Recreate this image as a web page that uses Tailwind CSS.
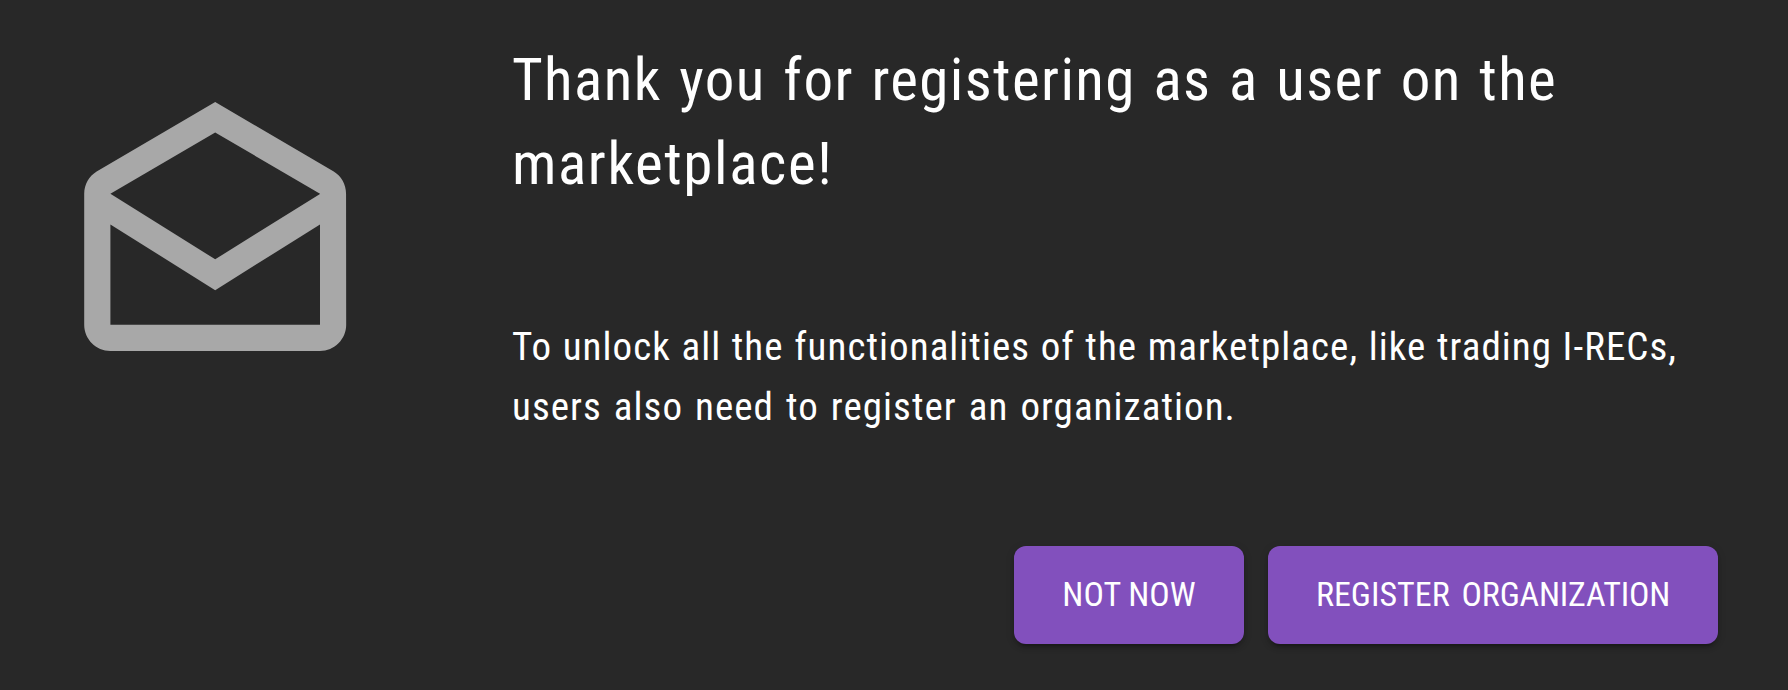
<!DOCTYPE html>
<html lang="en">
<head>
<meta charset="utf-8">
<title>Thank you for registering</title>
<script src="https://cdn.jsdelivr.net/npm/@tailwindcss/browser@4"></script>
</head>
<body class="bg-[#282828] text-white font-['Roboto',sans-serif]">
<main class="flex h-[690px] w-[1788px] overflow-hidden pl-[58px] pr-[70px] pt-[38px]">
  <svg class="mt-[51px] size-[314.4px] shrink-0 fill-[#a8a8a8]" viewBox="0 0 24 24" aria-hidden="true">
    <path d="M21.99 8c0-.72-.37-1.35-.94-1.7L12 1 2.95 6.3C2.38 6.65 2 7.28 2 8v10c0 1.1.9 2 2 2h16c1.1 0 2-.9 2-2l-.01-10zM20 8v.01L12 13 4 8l8-4.68L20 8zM4 18v-7.66l8 5.02 8-5.02V18H4z"/>
  </svg>
  <section class="ml-[139.6px] flex grow flex-col whitespace-nowrap font-normal [font-stretch:75%]">
    <h1 class="text-[59px] leading-[84px]">
      <span class="block tracking-[1.4px] [word-spacing:2.7px]">Thank you for registering as a user on the</span>
      <span class="block tracking-[1.6px]">marketplace!</span>
    </h1>
    <p class="mt-[111px] text-[39px] leading-[60px] tracking-[1.05px]">
      <span class="block [word-spacing:0.6px]">To unlock all the functionalities of the marketplace, like trading I-RECs,</span>
      <span class="block [word-spacing:2px]">users also need to register an organization.</span>
    </p>
    <div class="mt-[109px] flex justify-end gap-6 text-[34px]">
      <button class="h-[98px] w-[230px] rounded-xl bg-[#8250bd] pb-0.5 shadow-[0_6px_2px_-4px_rgba(0,0,0,0.2),0_4px_4px_rgba(0,0,0,0.14),0_2px_10px_rgba(0,0,0,0.12)]">NOT NOW</button>
      <button class="h-[98px] w-[450px] rounded-xl bg-[#8250bd] pb-0.5 shadow-[0_6px_2px_-4px_rgba(0,0,0,0.2),0_4px_4px_rgba(0,0,0,0.14),0_2px_10px_rgba(0,0,0,0.12)]">REGISTER <span class="ml-1 tracking-[-0.2px]">ORGANIZATION</span></button>
    </div>
  </section>
</main>
</body>
</html>
